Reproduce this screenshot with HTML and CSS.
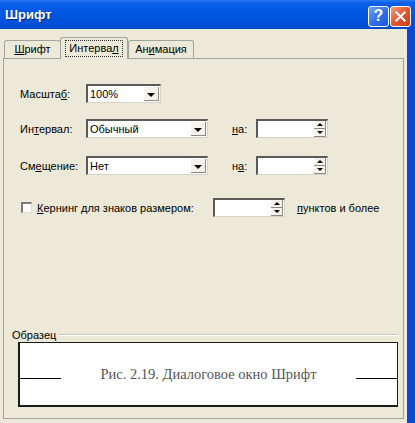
FILE: index.html
```html
<!doctype html>
<html lang="ru">
<head>
    <meta charset="UTF-8">
    <meta name="viewport" content="width=device-width, initial-scale=1.0">
    <title>Шрифт</title>
    <link rel="stylesheet" href="styles.css">
</head>
<body>
    <div class="window">
        <div class="titlebar">
            <span class="title">Шрифт</span>
            <div class="caption-buttons">
                <span class="cap-btn help">?</span>
                <span class="cap-btn close">
                    <svg width="21" height="21" viewBox="0 0 21 21">
                        <path d="M6 6 L15 15 M15 6 L6 15" stroke="#ffffff" stroke-width="2.4" stroke-linecap="square"/>
                    </svg>
                </span>
            </div>
        </div>
        <div class="client">
            <div class="tabs">
                <div class="tab tab-font"><u>Ш</u>рифт</div>
                <div class="tab active"><span class="focus">Интерва<u>л</u></span></div>
                <div class="tab tab-anim">Ан<u>и</u>мация</div>
            </div>
            <div class="panel">
                <div class="fields">
                    <div class="row">
                        <span class="lbl">Масшта<u>б</u>:</span>
                        <div class="combo short"><span class="value">100%</span><span class="drop"></span></div>
                    </div>
                    <div class="row gap-1">
                        <span class="lbl">Ин<u>т</u>ервал:</span>
                        <div class="combo"><span class="value">Обычный</span><span class="drop"></span></div>
                        <span class="lbl-on"><u>н</u>а:</span>
                        <div class="spin"><span class="value"></span><span class="spin-btns"><span class="up"></span><span class="down"></span></span></div>
                    </div>
                    <div class="row gap-2">
                        <span class="lbl">См<u>е</u>щение:</span>
                        <div class="combo"><span class="value">Нет</span><span class="drop"></span></div>
                        <span class="lbl-on">н<u>а</u>:</span>
                        <div class="spin"><span class="value"></span><span class="spin-btns"><span class="up"></span><span class="down"></span></span></div>
                    </div>
                    <div class="row kerning">
                        <span class="checkbox"></span>
                        <span class="kern-lbl"><u>К</u>ернинг для знаков размером:</span>
                        <div class="spin"><span class="value"></span><span class="spin-btns"><span class="up"></span><span class="down"></span></span></div>
                        <span class="kern-unit"><u>п</u>унктов и более</span>
                    </div>
                </div>
                <div class="sample">
                    <div class="sample-head">
                        <span class="sample-title">Образец</span>
                        <span class="sample-line"></span>
                    </div>
                    <div class="preview">
                        <span class="rule"></span>
                        <span class="preview-text">Рис. 2.19. Диалоговое окно Шрифт</span>
                        <span class="rule"></span>
                    </div>
                </div>
            </div>
        </div>
    </div>
</body>
</html>
```

FILE: styles.css
```css
body {
    margin: 0;
    background-color: #ece9d8;
    font-family: "Liberation Sans", Arial, sans-serif;
    font-size: 11px;
    color: #000000;
}

u {
    text-decoration: underline;
    text-underline-offset: 1px;
}

.window {
    width: 415px;
    height: 423px;
    overflow: hidden;
}

.titlebar {
    height: 29px;
    display: flex;
    align-items: center;
    justify-content: space-between;
    padding: 0 4px 0 5px;
    box-sizing: border-box;
    background: linear-gradient(to bottom, #2a7bf0 0px, #0a5ee8 3px, #0055e3 50%, #0050d8 85%, #0046c4 100%);
}

.title {
    color: #ffffff;
    font-size: 13px;
    font-weight: bold;
    text-shadow: 1px 1px 0 #0a2a80;
}

.caption-buttons {
    display: flex;
    gap: 1px;
    margin-top: 3px;
}

.cap-btn {
    width: 21px;
    height: 21px;
    box-sizing: border-box;
    border: 1px solid #ffffff;
    border-radius: 3px;
    display: flex;
    align-items: center;
    justify-content: center;
}

.help {
    background: linear-gradient(135deg, #6ea3f8 0%, #2f6ee8 55%, #1b55d6 100%);
    color: #ffffff;
    font-size: 16px;
    font-weight: bold;
}

.close {
    background: linear-gradient(135deg, #f0a080 0%, #e2552f 50%, #c8401c 100%);
}

.close svg {
    display: block;
}

.client {
    display: flex;
    flex-direction: column;
    height: 394px;
    border-right: 8px solid #0c49d0;
    box-shadow: inset -2px 0 0 #ece9d8;
}

.tabs {
    display: flex;
    align-items: flex-end;
    height: 21px;
    margin-top: 8px;
    padding-left: 4px;
}

.tab {
    height: 18px;
    line-height: 17px;
    border: 1px solid #a0a49c;
    border-bottom: none;
    border-radius: 3px 3px 0 0;
    box-sizing: border-box;
    text-align: center;
    margin-right: -1px;
}

.tab-font {
    width: 57px;
}

.tab-anim {
    width: 66px;
}

.tab.active {
    width: 68px;
    height: 22px;
    padding-top: 2px;
    margin: 0 0 -1px 0;
    background-color: #ece9d8;
    position: relative;
    z-index: 1;
}

.focus {
    display: inline-block;
    line-height: 15px;
    padding: 0 3px;
    border: 1px dotted #303030;
}

.panel {
    display: flex;
    flex-direction: column;
    height: 361px;
    margin: 0 3px 0 3px;
    border: 1px solid #a0a49c;
    box-sizing: border-box;
}

.fields {
    padding: 25px 0 0 16px;
}

.row {
    display: flex;
    align-items: center;
    height: 19px;
}

.gap-1 {
    margin-top: 16px;
}

.gap-2 {
    margin-top: 18px;
}

.lbl {
    width: 66px;
}

.lbl-on {
    width: 24px;
    margin-left: 24px;
}

.combo, .spin {
    display: flex;
    height: 19px;
    box-sizing: border-box;
    background-color: #ffffff;
    border-top: 2px solid #5a5a5a;
    border-left: 2px solid #5a5a5a;
    border-right: 1px solid #d6d2c4;
    border-bottom: 1px solid #d6d2c4;
}

.combo {
    width: 122px;
}

.combo.short {
    width: 75px;
}

.value {
    flex: 1;
    line-height: 16px;
    padding-left: 2px;
}

.drop {
    width: 15px;
    margin: 1px;
    background-color: #f4f2ea;
    border-right: 1px solid #8a8a84;
    border-bottom: 1px solid #8a8a84;
    box-sizing: border-box;
    position: relative;
}

.drop::after {
    content: "";
    position: absolute;
    left: 3px;
    top: 6px;
    border-left: 4px solid transparent;
    border-right: 4px solid transparent;
    border-top: 4px solid #000000;
}

.spin {
    width: 72px;
}

.spin-btns {
    display: flex;
    flex-direction: column;
    width: 12px;
    margin: 0 1px 0 0;
}

.spin-btns span {
    flex: 1;
    background-color: #f4f2ea;
    border-bottom: 1px solid #8a8a84;
    border-right: 1px solid #8a8a84;
    position: relative;
}

.spin-btns .up::after, .spin-btns .down::after {
    content: "";
    position: absolute;
    left: 3px;
    border-left: 3px solid transparent;
    border-right: 3px solid transparent;
}

.spin-btns .up::after {
    top: 2px;
    border-bottom: 3px solid #000000;
}

.spin-btns .down::after {
    top: 2px;
    border-top: 3px solid #000000;
}

.kerning {
    margin-top: 23px;
}

.checkbox {
    width: 11px;
    height: 11px;
    box-sizing: border-box;
    margin: 0 5px 0 1px;
    background-color: #ffffff;
    border-top: 2px solid #7a7a7a;
    border-left: 2px solid #7a7a7a;
    border-right: 1px solid #e0ddd2;
    border-bottom: 1px solid #e0ddd2;
}

.kern-lbl {
    width: 176px;
}

.kern-unit {
    margin-left: 12px;
}

.sample {
    margin-top: auto;
    padding: 0 5px 11px 8px;
}

.sample-head {
    display: flex;
    align-items: center;
    height: 14px;
}

.sample-title {
    margin-right: 3px;
}

.sample-line {
    flex: 1;
    height: 0;
    border-top: 1px solid #c8c4b6;
    border-bottom: 1px solid #ffffff;
}

.preview {
    display: flex;
    align-items: center;
    height: 65px;
    margin-left: 6px;
    box-sizing: border-box;
    background-color: #ffffff;
    border: 2px solid #1a1a1a;
    border-top-width: 1px;
    border-right-width: 1px;
}

.rule {
    width: 41px;
    height: 0;
    border-top: 1px solid #000000;
    margin-top: 9px;
}

.preview-text {
    flex: 1;
    text-align: center;
    font-family: "Liberation Serif", "Times New Roman", serif;
    font-size: 14.5px;
    color: #555555;
}
```
